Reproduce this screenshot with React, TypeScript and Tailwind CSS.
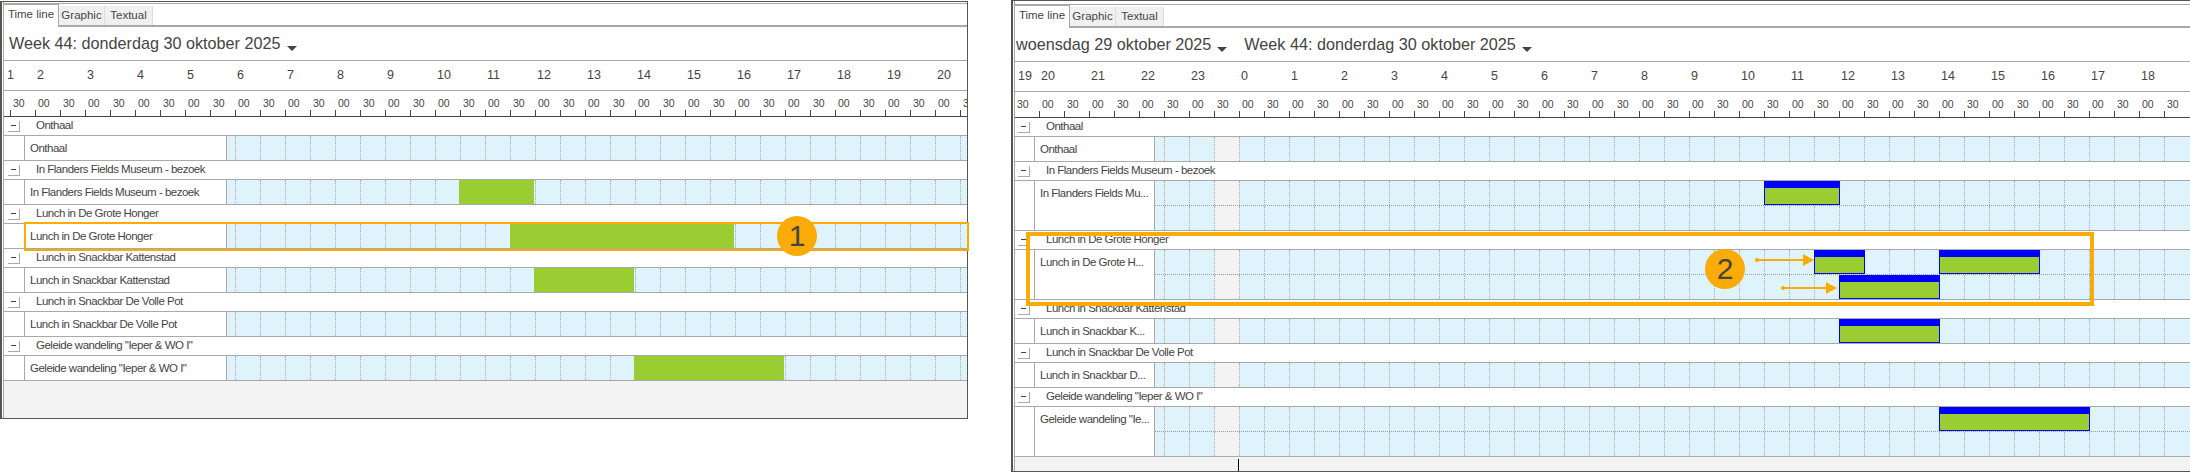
import React from 'react';

const ORANGE = '#faab05';
const FONT = '"Liberation Sans", Arial, sans-serif';

type Bar = { left: number; top: number; width: number };
type Row = { title: string; label: string; tall?: boolean; bars?: Bar[]; solid?: [number, number][] };

const leftRows: Row[] = [
  { title: 'Onthaal', label: 'Onthaal' },
  { title: 'In Flanders Fields Museum - bezoek', label: 'In Flanders Fields Museum - bezoek', solid: [[232, 75]] },
  { title: 'Lunch in De Grote Honger', label: 'Lunch in De Grote Honger', solid: [[283, 224]] },
  { title: 'Lunch in Snackbar Kattenstad', label: 'Lunch in Snackbar Kattenstad', solid: [[307, 100]] },
  { title: 'Lunch in Snackbar De Volle Pot', label: 'Lunch in Snackbar De Volle Pot' },
  { title: 'Geleide wandeling "Ieper & WO I"', label: 'Geleide wandeling "Ieper & WO I"', solid: [[407, 150]] },
];

const rightRows: Row[] = [
  { title: 'Onthaal', label: 'Onthaal' },
  { title: 'In Flanders Fields Museum - bezoek', label: 'In Flanders Fields Mu...', tall: true, bars: [{ left: 609, top: 0, width: 76 }] },
  {
    title: 'Lunch in De Grote Honger',
    label: 'Lunch in De Grote H...',
    tall: true,
    bars: [
      { left: 659, top: 0, width: 51 },
      { left: 784, top: 0, width: 101 },
      { left: 684, top: 25, width: 101 },
    ],
  },
  { title: 'Lunch in Snackbar Kattenstad', label: 'Lunch in Snackbar K...', bars: [{ left: 684, top: 0, width: 101 }] },
  { title: 'Lunch in Snackbar De Volle Pot', label: 'Lunch in Snackbar D...' },
  { title: 'Geleide wandeling "Ieper & WO I"', label: 'Geleide wandeling "Ie...', tall: true, bars: [{ left: 784, top: 0, width: 151 }] },
];

function Tabs() {
  return (
    <div className="flex h-[23px] items-end border-b-2 border-[#a9a9a9] text-[11.5px] text-[#444]">
      <div className="relative top-[2px] flex h-[23px] w-[55px] items-center justify-center border-t border-r border-[#a9a9a9] bg-white pb-[2px]">Time line</div>
      <div className="flex h-[19px] w-[46px] items-center justify-center border-r border-[#ddd] bg-[#f0f0f0]">Graphic</div>
      <div className="flex h-[19px] w-[48px] items-center justify-center border-r border-[#ddd] bg-[#f0f0f0]">Textual</div>
    </div>
  );
}

function Title({ parts, pad }: { parts: string[]; pad: number }) {
  return (
    <div className="flex h-[34px] items-center border-b border-[#a9a9a9] text-[16.2px] text-[#444]" style={{ paddingLeft: pad }}>
      {parts.map((p, i) => (
        <React.Fragment key={p}>
          <span className={i === 1 ? 'ml-[17px] whitespace-nowrap' : 'whitespace-nowrap'}>{p}</span>
          <span className="mt-[10px] ml-[6px] h-0 w-0 border-x-[5px] border-t-[5px] border-x-transparent border-t-[#444]" />
        </React.Fragment>
      ))}
    </div>
  );
}

function Axis(props: { hours: string[]; leadHour: string; leadMinute?: string; first: number; count: number; hourGap: number; startMinute: number }) {
  const { hours, leadHour, leadMinute, first, count, hourGap, startMinute } = props;
  const minutes = Array.from({ length: count }, (_, i) => ((i + startMinute) % 2 === 0 ? '30' : '00'));
  return (
    <>
      <div className="flex h-[30px] items-center overflow-hidden border-b border-[#a9a9a9] text-[12.5px] text-[#444]">
        <span className="shrink-0 pl-[3px]" style={{ width: hourGap }}>{leadHour}</span>
        {hours.map((h, i) => (
          <span key={i} className="w-[50px] shrink-0 pl-[2px]">{h}</span>
        ))}
      </div>
      <div className="flex h-[26px] overflow-hidden border-b border-[#444] text-[10.5px] text-[#444]">
        <span className="shrink-0 pt-[5px] pl-[2px] leading-[14px]" style={{ width: first }}>{leadMinute}</span>
        {minutes.map((m, i) => (
          <span key={i} className="flex h-[25px] w-[25px] shrink-0 flex-col">
            <span className="h-[19px] pt-[5px] pl-[3px] leading-[14px]">{m}</span>
            <span className="mt-auto h-[6px] w-px bg-[#444]" />
          </span>
        ))}
      </div>
    </>
  );
}

function Slots({ first, count, grayAt, divided }: { first: number; count: number; grayAt?: number; divided?: boolean }) {
  return (
    <div className={divided ? 'flex h-[25px] border-b border-dotted border-[#999]' : 'flex h-[24px]'}>
      <span className="shrink-0" style={{ width: first }} />
      {Array.from({ length: count }, (_, i) => (
        <span key={i} className={i === grayAt ? 'w-[25px] shrink-0 border-l border-dotted border-[#aaa] bg-[#f3f3f3]' : 'w-[25px] shrink-0 border-l border-dotted border-[#aaa]'} />
      ))}
    </div>
  );
}

function Lane({ row, first, count, grayAt }: { row: Row; first: number; count: number; grayAt?: number }) {
  return (
    <div className="relative min-w-0 flex-1 overflow-hidden bg-[#dff3fd]">
      <Slots first={first} count={count} grayAt={grayAt} divided={row.tall} />
      {row.tall && <Slots first={first} count={count} grayAt={grayAt} />}
      {row.solid?.map(([left, width]) => (
        <div key={left} className="absolute top-0 bottom-0 bg-[#9acd32]" style={{ left, width }} />
      ))}
      {row.bars?.map((b) => (
        <div key={b.left + '-' + b.top} className="absolute h-[24px] border border-t-[7px] border-[#0000ff] bg-[#9acd32]" style={{ left: b.left, top: b.top, width: b.width }} />
      ))}
    </div>
  );
}

function Rows({ rows, indent, labelWidth, first, count, grayAt }: { rows: Row[]; indent: number; labelWidth: number; first: number; count: number; grayAt?: number }) {
  return (
    <div className="text-[11.5px] tracking-[-0.5px] text-[#444]">
      {rows.map((row) => (
        <div key={row.title} className="border-b border-[#a9a9a9]">
          <div className="flex h-[19px] items-center border-b border-[#a9a9a9]">
            <span className="flex h-[11px] w-[12px] shrink-0 items-center justify-center border-r border-b border-[#a9a9a9] pr-[1px]" style={{ marginLeft: indent - 16 }}>
              <span className="h-px w-[5px] bg-[#444]" />
            </span>
            <span className="ml-[16px] whitespace-nowrap">{row.title}</span>
          </div>
          <div className="flex">
            <div className="shrink-0 border-x border-[#a9a9a9] bg-white pt-[3px] pl-[5px] leading-[18px] whitespace-nowrap" style={{ width: labelWidth, marginLeft: indent }}>
              {row.label}
            </div>
            <Lane row={row} first={first} count={count} grayAt={grayAt} />
          </div>
        </div>
      ))}
    </div>
  );
}

function Badge({ n, className }: { n: string; className: string }) {
  return (
    <div className={`absolute flex h-[40px] w-[40px] items-center justify-center rounded-full bg-[#faab05] text-[30px] leading-none text-[#444] ${className}`}>
      {n}
    </div>
  );
}

function Arrow({ className, length }: { className: string; length: number }) {
  return (
    <svg className={`absolute ${className}`} width={length + 2} height="12" viewBox={`0 0 ${length + 2} 12`}>
      <circle cx="3" cy="6" r="2" fill={ORANGE} />
      <rect x="3" y="5" width={length - 12} height="2" fill={ORANGE} />
      <polygon points={`${length - 11},0 ${length},6 ${length - 11},12`} fill={ORANGE} />
    </svg>
  );
}

export default function App() {
  const leftHours = ['2', '3', '4', '5', '6', '7', '8', '9', '10', '11', '12', '13', '14', '15', '16', '17', '18', '19', '20'];
  const rightHours = ['20', '21', '22', '23', '0', '1', '2', '3', '4', '5', '6', '7', '8', '9', '10', '11', '12', '13', '14', '15', '16', '17', '18'];

  return (
    <div className="flex h-[472px] w-[2190px] items-start bg-white" style={{ fontFamily: FONT }}>
      <div className="relative mt-[1px] h-[418px] w-[968px] border-y border-r border-l-2 border-[#555] pl-[1px]">
        <div className="flex h-full flex-col border-l border-[#a9a9a9] pt-[1px]">
          <div className="border-t border-[#a9a9a9]" />
          <Tabs />
          <Title parts={['Week 44: donderdag 30 oktober 2025']} pad={5} />
          <Axis hours={leftHours} leadHour="1" first={6} count={39} hourGap={31} startMinute={0} />
          <Rows rows={leftRows} indent={20} labelWidth={203} first={8} count={30} />
          <div className="flex-1 bg-[#f3f3f3]" />
        </div>
        <div className="absolute top-[220px] left-[22px] h-[29px] w-[945px] border-2 border-[#faab05]" />
        <Badge n="1" className="top-[214px] left-[775px]" />
      </div>

      <div className="relative ml-[43px] h-[472px] w-[1179px] border-y border-l-2 border-[#555] pl-[1px]">
        <div className="flex h-full flex-col border-l border-[#a9a9a9] pt-[3px]">
          <div className="border-t border-[#a9a9a9]" />
          <Tabs />
          <Title parts={['woensdag 29 oktober 2025', 'Week 44: donderdag 30 oktober 2025']} pad={1} />
          <Axis hours={rightHours} leadHour="19" leadMinute="30" first={24} count={46} hourGap={24} startMinute={1} />
          <Rows rows={rightRows} indent={19} labelWidth={121} first={9} count={41} grayAt={2} />
          <div className="relative flex-1 bg-[#f3f3f3]">
            <span className="absolute top-[2px] bottom-0 left-[223px] w-px bg-black" />
          </div>
        </div>
        <div className="absolute top-[231px] left-[13px] h-[74px] w-[1068px] border-4 border-[#faab05]" />
        <Badge n="2" className="top-[248px] left-[692px]" />
        <Arrow className="top-[253px] left-[741px]" length={60} />
        <Arrow className="top-[281px] left-[767px]" length={57} />
      </div>
    </div>
  );
}
